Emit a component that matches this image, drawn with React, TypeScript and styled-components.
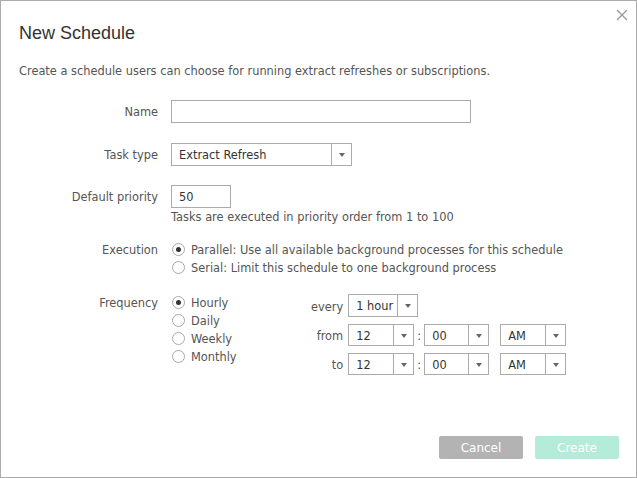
import React from "react";
import styled, { createGlobalStyle } from "styled-components";

const Global = createGlobalStyle`
  html, body { margin: 0; padding: 0; background: #fff; }
  * { box-sizing: border-box; }
  body { font-family: "DejaVu Sans", Verdana, sans-serif; }
`;

const Dialog = styled.div`
  position: relative;
  width: 637px;
  height: 478px;
  border: 1px solid #ababab;
  background: #fff;
  display: flex;
  flex-direction: column;
  padding: 0 17px 18px 18px;
  font-family: "DejaVu Sans", Verdana, sans-serif;
  font-size: 11.4px;
  color: #555;
`;

const Close = styled.button`
  position: absolute;
  top: 7px;
  right: 7px;
  width: 14px;
  height: 14px;
  padding: 0;
  border: 0;
  background: none;
  display: flex;
  align-items: center;
  justify-content: center;
`;

const Title = styled.h1`
  margin: 21px 0 0;
  font-family: "Liberation Sans", Arial, sans-serif;
  font-weight: normal;
  font-size: 18px;
  line-height: 22px;
  color: #333;
`;

const Description = styled.p`
  margin: 18px 0 0;
  padding-top: 2px;
  line-height: 14px;
`;

const Form = styled.div`
  margin-top: 22px;
  display: grid;
  grid-template-columns: 139px 1fr;
  column-gap: 13px;
  align-items: start;
`;

const Label = styled.div<{ $mt?: number; $lh?: number }>`
  margin-top: ${(p) => p.$mt ?? 0}px;
  padding-top: 2px;
  text-align: right;
  line-height: ${(p) => (p.$lh ?? 23) - 2}px;
  white-space: nowrap;
`;

const Field = styled.div<{ $mt?: number }>`
  margin-top: ${(p) => p.$mt ?? 0}px;
  display: flex;
  flex-direction: column;
`;

const TextInput = styled.div<{ $w: number }>`
  width: ${(p) => p.$w}px;
  height: 23px;
  border: 1px solid #ababab;
  padding: 2px 7px 0;
  line-height: 19px;
  color: #333;
`;

const Help = styled.div`
  padding-top: 2px;
  line-height: 14px;
`;

const SelectBox = styled.div<{ $w: number; $h?: number }>`
  width: ${(p) => p.$w}px;
  height: ${(p) => p.$h ?? 23}px;
  border: 1px solid #ababab;
  display: flex;
  color: #333;
  background: #fff;
`;

const SelectValue = styled.div<{ $h?: number }>`
  flex: 1;
  padding: 2px 0 0 7px;
  line-height: ${(p) => (p.$h ?? 23) - 4}px;
  white-space: nowrap;
`;

const SelectArrow = styled.div`
  width: 20px;
  border-left: 1px solid #ababab;
  display: flex;
  align-items: center;
  justify-content: center;
`;

const Triangle = styled.span`
  width: 0;
  height: 0;
  border-left: 3.5px solid transparent;
  border-right: 3.5px solid transparent;
  border-top: 4px solid #666;
  margin-top: 1px;
`;

const RadioList = styled.div<{ $w?: number }>`
  display: flex;
  flex-direction: column;
  ${(p) => (p.$w ? `width: ${p.$w}px;` : "")}
`;

const RadioRow = styled.div`
  display: flex;
  align-items: center;
  height: 18px;
  gap: 6px;
  white-space: nowrap;
`;

const RadioText = styled.span`
  padding-top: 2px;
`;

const RadioCircle = styled.span<{ $on?: boolean }>`
  width: 13px;
  height: 13px;
  margin: 1px 0 0 1px;
  border-radius: 50%;
  border: 1px solid #a8a8a8;
  background: #fff;
  display: flex;
  align-items: center;
  justify-content: center;
  &::after {
    content: "";
    display: ${(p) => (p.$on ? "block" : "none")};
    width: 5px;
    height: 5px;
    border-radius: 50%;
    background: #333;
  }
`;

const FreqRow = styled.div`
  display: flex;
  align-items: flex-start;
`;

const TimeGrid = styled.div`
  margin-top: 1px;
  display: grid;
  grid-template-columns: auto auto;
  column-gap: 5px;
  row-gap: 7px;
  align-items: center;
`;

const TimeLabel = styled.div`
  text-align: right;
  padding-top: 2px;
`;

const TimeControls = styled.div`
  display: flex;
  align-items: center;
`;

const Colon = styled.span`
  width: 10px;
  padding-top: 2px;
  text-align: center;
  color: #555;
`;

const Spacer = styled.span`
  width: 11px;
`;

const Footer = styled.div`
  margin-top: auto;
  display: flex;
  justify-content: flex-end;
  gap: 12px;
`;

const Button = styled.button<{ $bg: string }>`
  width: 84px;
  height: 23px;
  border: 0;
  border-radius: 2px;
  background: ${(p) => p.$bg};
  color: #fff;
  font-family: "DejaVu Sans", Verdana, sans-serif;
  font-size: 12px;
  padding: 1px 0 0;
`;

function Select({ w, h, value }: { w: number; h?: number; value: string }) {
  return (
    <SelectBox $w={w} $h={h}>
      <SelectValue $h={h}>{value}</SelectValue>
      <SelectArrow>
        <Triangle />
      </SelectArrow>
    </SelectBox>
  );
}

function Radio({ on, label }: { on?: boolean; label: string }) {
  return (
    <RadioRow>
      <RadioCircle $on={on} />
      <RadioText>{label}</RadioText>
    </RadioRow>
  );
}

export default function App() {
  return (
    <>
      <Global />
      <Dialog>
        <Close aria-label="Close">
          <svg width="12" height="12" viewBox="0 0 12 12">
            <path d="M1 1L11 11M11 1L1 11" stroke="#9a9a9a" strokeWidth="1.4" />
          </svg>
        </Close>
        <Title>New Schedule</Title>
        <Description>
          Create a schedule users can choose for running extract refreshes or subscriptions.
        </Description>
        <Form>
          <Label>Name</Label>
          <Field>
            <TextInput $w={300} />
          </Field>

          <Label $mt={20}>Task type</Label>
          <Field $mt={20}>
            <Select w={181} value="Extract Refresh" />
          </Field>

          <Label $mt={19}>Default priority</Label>
          <Field $mt={19}>
            <TextInput $w={60}>50</TextInput>
            <Help>Tasks are executed in priority order from 1 to 100</Help>
          </Field>

          <Label $mt={16} $lh={18}>Execution</Label>
          <Field $mt={16}>
            <RadioList>
              <Radio on label="Parallel: Use all available background processes for this schedule" />
              <Radio label="Serial: Limit this schedule to one background process" />
            </RadioList>
          </Field>

          <Label $mt={17} $lh={18}>Frequency</Label>
          <Field $mt={17}>
            <FreqRow>
              <RadioList $w={140}>
                <Radio on label="Hourly" />
                <Radio label="Daily" />
                <Radio label="Weekly" />
                <Radio label="Monthly" />
              </RadioList>
              <TimeGrid>
                <TimeLabel>every</TimeLabel>
                <TimeControls>
                  <Select w={70} value="1 hour" />
                </TimeControls>
                <TimeLabel>from</TimeLabel>
                <TimeControls>
                  <Select w={66} h={22} value="12" />
                  <Colon>:</Colon>
                  <Select w={65} h={22} value="00" />
                  <Spacer />
                  <Select w={66} h={22} value="AM" />
                </TimeControls>
                <TimeLabel>to</TimeLabel>
                <TimeControls>
                  <Select w={66} h={22} value="12" />
                  <Colon>:</Colon>
                  <Select w={65} h={22} value="00" />
                  <Spacer />
                  <Select w={66} h={22} value="AM" />
                </TimeControls>
              </TimeGrid>
            </FreqRow>
          </Field>
        </Form>
        <Footer>
          <Button $bg="#b3b3b3">Cancel</Button>
          <Button $bg="#b4ecd9">Create</Button>
        </Footer>
      </Dialog>
    </>
  );
}
